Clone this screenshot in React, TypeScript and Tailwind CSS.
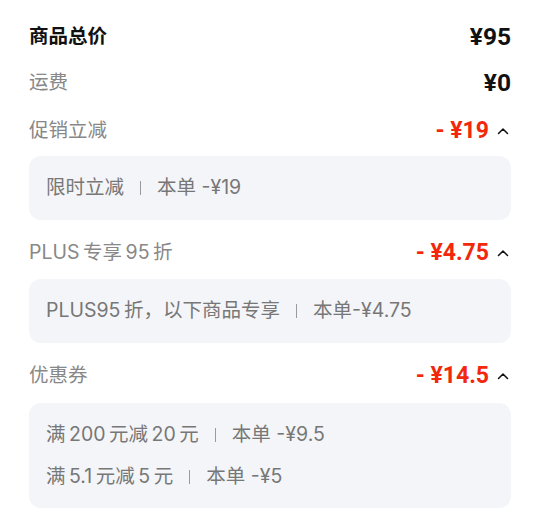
import React from "react";

const FONT = { fontFamily: '"Inter", "Noto Sans CJK SC", sans-serif' };
const NUM = { fontFamily: 'Roboto, "Noto Sans CJK SC", sans-serif' };

function Chevron() {
  return (
    <svg width="12" height="8" viewBox="0 0 12 8" className="ml-[8px] mr-[2px]">
      <path d="M1.5 6.5 L6 2 L10.5 6.5" fill="none" stroke="#111" strokeWidth="1.5" strokeLinecap="round" strokeLinejoin="round" />
    </svg>
  );
}

function Sep() {
  return <span className="mx-[16px] inline-block h-[14px] w-px bg-[#9a9a9a]" />;
}

function Row({ label, value, bold, red }: { label: string; value: string; bold?: boolean; red?: boolean }) {
  return (
    <div className="flex h-[46px] items-center justify-between">
      <span className={bold ? "text-[19.5px] font-bold text-[#111]" : "text-[19.5px] text-[#888]"}>{label}</span>
      <div className="flex items-center">
        <span
          style={NUM}
          className={red ? "text-[23px] font-bold text-[#f2270c]" : "text-[24.5px] font-bold text-[#111]"}
        >
          {value}
        </span>
        {red && <Chevron />}
      </div>
    </div>
  );
}

function Line({ a, b }: { a: string; b: string }) {
  return (
    <div className="flex h-[42px] items-center text-[19.5px] text-[#777]">
      <span>{a}</span>
      <Sep />
      <span>{b}</span>
    </div>
  );
}

export default function App() {
  return (
    <div style={FONT} className="h-[513px] w-[540px] overflow-hidden bg-white px-[29px] pt-[14px]">
      <Row label="商品总价" value="¥95" bold />
      <Row label="运费" value="¥0" />
      <div className="mt-[2px]">
        <Row label="促销立减" value="- ¥19" red />
      </div>
      <div className="mt-[2px] rounded-[12px] bg-[#f4f5f8] px-[17px] py-[11px]">
        <Line a="限时立减" b="本单 -¥19" />
      </div>
      <div className="mt-[10px]">
        <Row label={"PLUS\u2009专享\u200995\u2009折"} value="- ¥4.75" red />
      </div>
      <div className="mt-[3px] rounded-[12px] bg-[#f4f5f8] px-[17px] py-[11px]">
        <Line a={"PLUS95\u2009折，以下商品专享"} b="本单-¥4.75" />
      </div>
      <div className="mt-[10px]">
        <Row label="优惠券" value="- ¥14.5" red />
      </div>
      <div className="mt-[4px] rounded-[12px] bg-[#f4f5f8] px-[17px] pt-[11px] pb-[10px]">
        <Line a={"满\u2009200\u2009元减\u200920\u2009元"} b="本单 -¥9.5" />
        <Line a={"满\u20095.1\u2009元减\u20095\u2009元"} b="本单 -¥5" />
      </div>
    </div>
  );
}
